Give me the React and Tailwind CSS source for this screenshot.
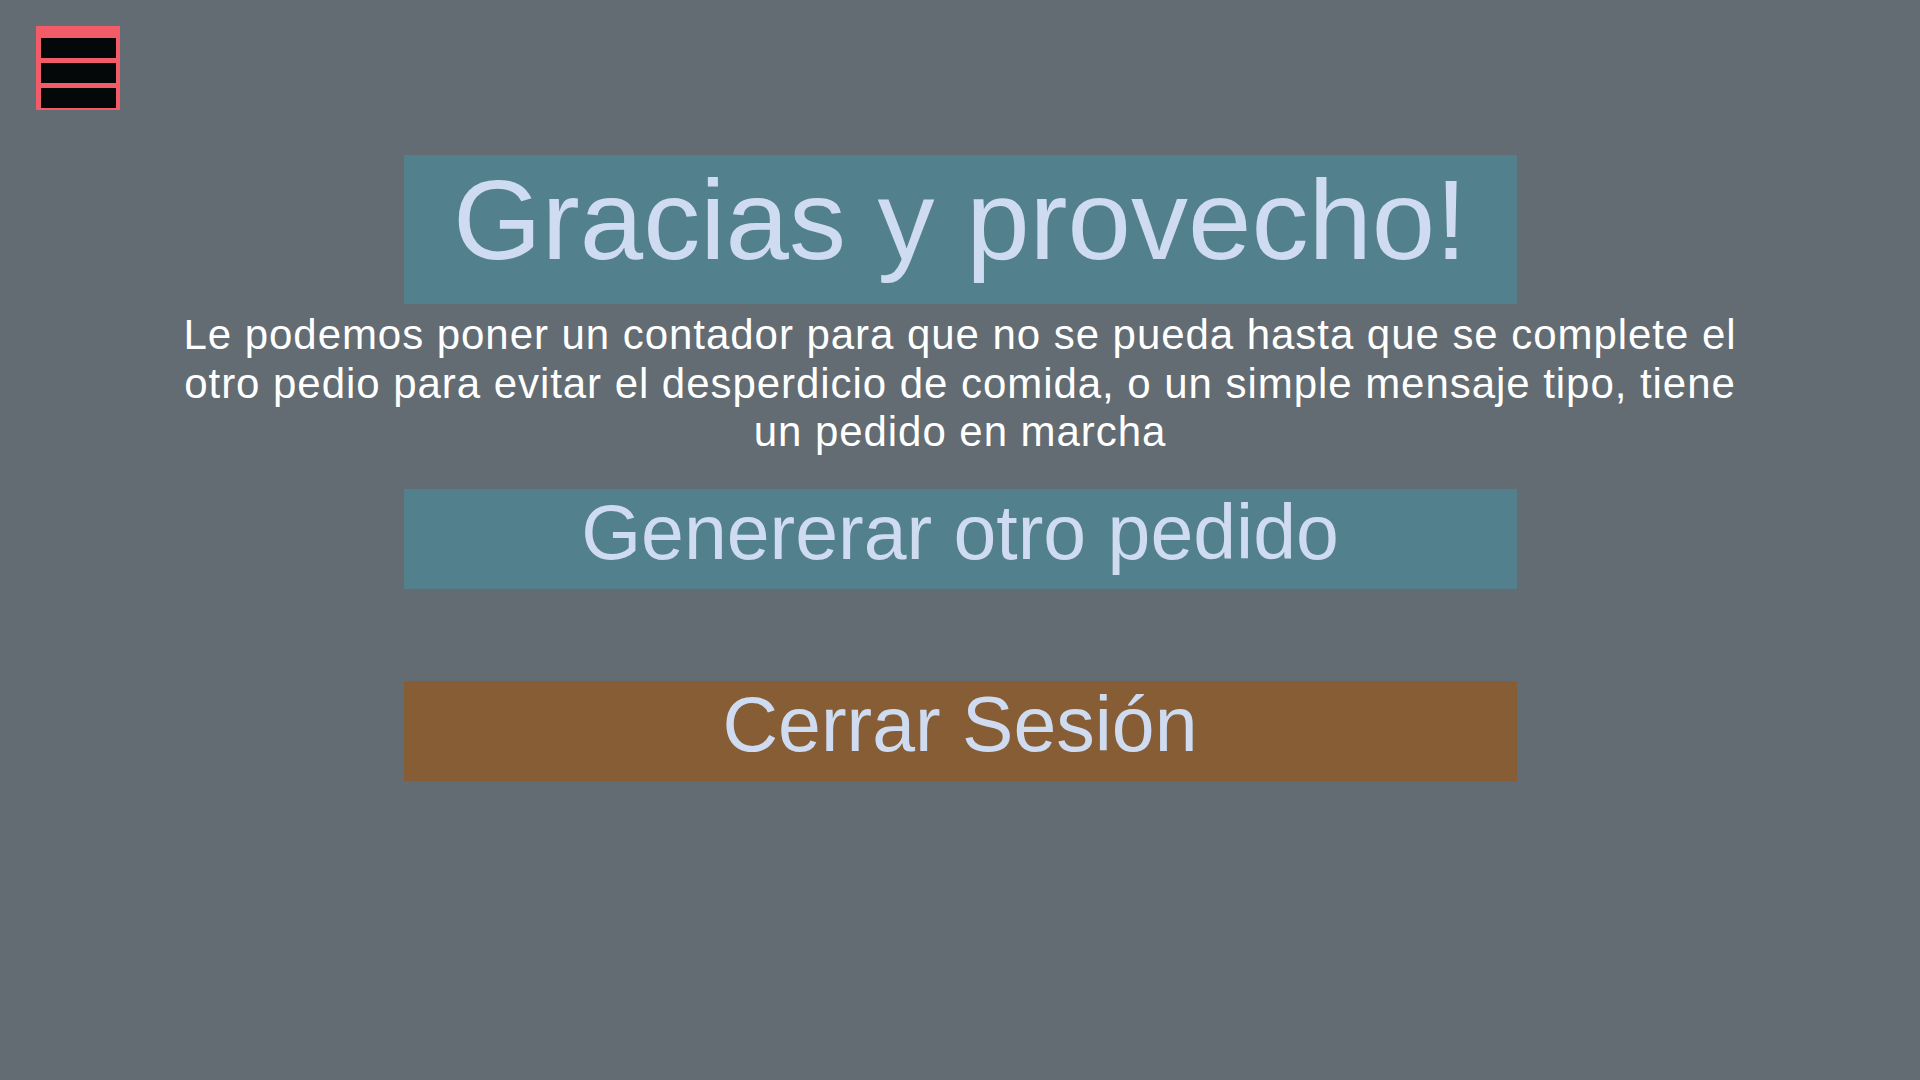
export default function App() {
  return (
    <div
      className="min-h-screen w-full bg-[#626c72]"
      style={{ fontFamily: '"Liberation Sans", Arial, sans-serif' }}
    >
      <div className="pl-[36px] pt-[26px]">
        <button className="flex h-[84px] w-[84px] flex-col gap-[5px] bg-[#f25c69] pb-[2px] pl-[5px] pr-[4px] pt-[12px]">
          <span className="block h-[20px] w-[75px] bg-[#040809]" />
          <span className="block h-[20px] w-[75px] bg-[#040809]" />
          <span className="block h-[20px] w-[75px] bg-[#040809]" />
        </button>
      </div>
      <main className="mt-[45px] flex flex-col items-center">
        <div className="h-[149px] w-[1113px] bg-[#52808c] pt-[8px] text-center">
          <h1 className="text-[114px] leading-none text-[#cfdbf1]">Gracias y provecho!</h1>
        </div>
        <p className="mt-[7px] w-[1580px] text-center text-[42px] leading-[48.5px] tracking-[0.95px] text-white">
          Le podemos poner un contador para que no se pueda hasta que se complete el otro pedio para evitar el desperdicio de comida, o un simple mensaje tipo, tiene un pedido en marcha
        </p>
        <button className="mt-[32px] flex h-[100px] w-[1113px] items-start justify-center bg-[#52808c] pt-[5px] text-center text-[77px] leading-none text-[#cfdbf1]">
          Genererar otro pedido
        </button>
        <button className="mt-[92px] flex h-[100px] w-[1113px] items-start justify-center bg-[#865d34] pt-[5px] text-center text-[77px] leading-none text-[#cfdbf1]">
          Cerrar Sesión
        </button>
      </main>
    </div>
  );
}
